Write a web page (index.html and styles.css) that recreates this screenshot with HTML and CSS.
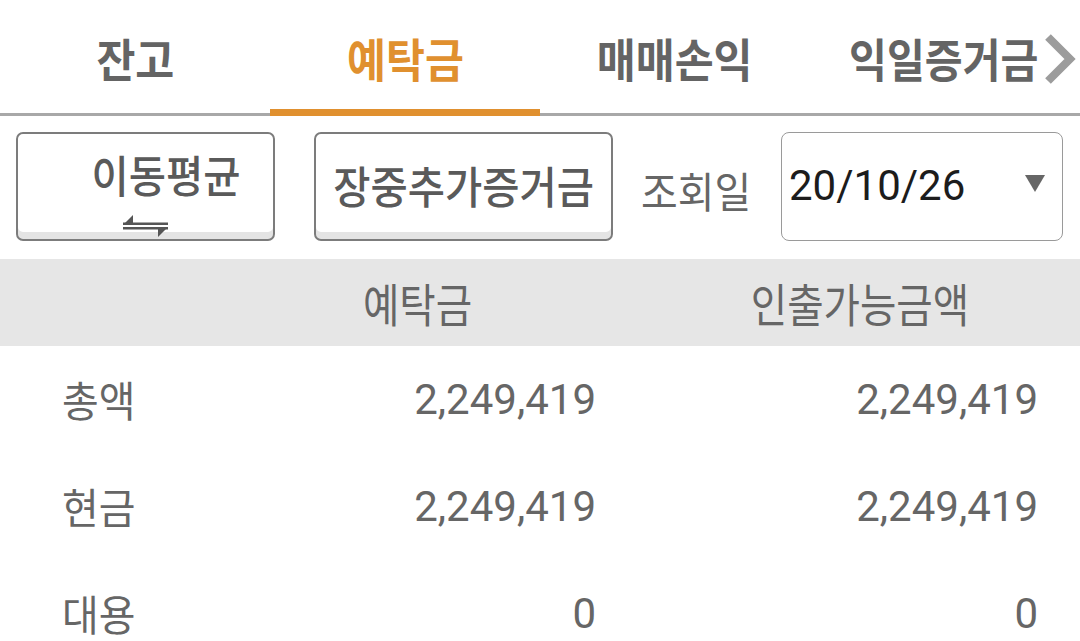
FILE: index.html
```html
<!DOCTYPE html>
<html lang="ko">
<head>
<meta charset="utf-8">
<title>예탁금</title>
<link rel="stylesheet" href="styles.css">
</head>
<body>
<nav class="tabs">
  <div class="tab"><span class="tl">잔고</span></div>
  <div class="tab active"><span class="tl">예탁금</span></div>
  <div class="tab"><span class="tl">매매손익</span></div>
  <div class="tab last"><span class="tl">익일증거금</span>
    <svg class="chev" width="32" height="50" viewBox="0 0 32 50"><polyline points="4,3 26,25 4,47" fill="none" stroke="#9c9c9c" stroke-width="8"/></svg>
  </div>
</nav>

<section class="controls">
  <button class="btn btn-ma">
    <span class="bt">이동평균</span>
    <svg class="swap" width="48" height="24" viewBox="0 0 48 24">
      <rect x="1" y="8.5" width="45" height="2.5" fill="#555"/>
      <polygon points="1,11 11,1 11,11" fill="#555"/>
      <rect x="1" y="13" width="45" height="2.5" fill="#555"/>
      <polygon points="36,13 46,13 36,23" fill="#555"/>
    </svg>
  </button>
  <button class="btn btn-add"><span class="bt">장중추가증거금</span></button>
  <span class="lbl"><span class="kr">조회일</span></span>
  <div class="select">
    <span class="date">20/10/26</span>
    <svg class="tri" width="20" height="17" viewBox="0 0 20 17"><polygon points="0,0 20,0 10,17" fill="#666"/></svg>
  </div>
</section>

<section class="table">
  <div class="row head">
    <div class="c1"></div>
    <div class="c2"><span class="hk">예탁금</span></div>
    <div class="c3"><span class="hk">인출가능금액</span></div>
  </div>
  <div class="row">
    <div class="c1"><span class="kr">총액</span></div>
    <div class="c2 num">2,249,419</div>
    <div class="c3 num">2,249,419</div>
  </div>
  <div class="row">
    <div class="c1"><span class="kr">현금</span></div>
    <div class="c2 num">2,249,419</div>
    <div class="c3 num">2,249,419</div>
  </div>
  <div class="row">
    <div class="c1"><span class="kr">대용</span></div>
    <div class="c2 num">0</div>
    <div class="c3 num">0</div>
  </div>
</section>
</body>
</html>
```
FILE: styles.css
```css
* { box-sizing: border-box; }
html, body {
  margin: 0;
  padding: 0;
  background: #ffffff;
  width: 1080px;
  height: 641px;
  overflow: hidden;
  font-family: Roboto, "Noto Sans CJK KR", sans-serif;
  color: #666666;
}

/* Tabs */
.tabs {
  display: flex;
  height: 116px;
  border-bottom: 3px solid #a8a8a8;
}
.tab {
  position: relative;
  width: 270px;
  display: flex;
  align-items: center;
  justify-content: center;
  white-space: nowrap;
}
.tl {
  display: inline-block;
  font-family: "Noto Sans CJK KR", sans-serif;
  font-weight: 700;
  font-size: 46px;
  line-height: 1;
  color: #646464;
  transform: scaleX(0.92);
  transform-origin: center;
}
.tab.active .tl { color: #e0902f; }
.tab.active::after {
  content: "";
  position: absolute;
  left: 0;
  right: 0;
  bottom: -3px;
  height: 7px;
  background: #e0902f;
}
.tab.last { justify-content: flex-start; padding-left: 39px; }
.tab.last .tl { transform: scaleX(0.895); transform-origin: left center; }
.chev {
  position: absolute;
  right: 4px;
  top: 34px;
}

/* Controls */
.controls {
  display: flex;
  align-items: center;
  height: 109px;
  margin-top: 16px;
  padding-left: 16px;
}
.btn {
  height: 109px;
  background: #ffffff;
  border: 2px solid #7c7c7c;
  border-radius: 7px;
  box-shadow: inset 0 -7px 0 #e4e4e4;
  padding: 0;
  margin: 0;
  font-family: "Noto Sans CJK KR", sans-serif;
  cursor: pointer;
}
.bt {
  display: inline-block;
  font-size: 44px;
  font-weight: 500;
  line-height: 1;
  color: #5a5a5a;
  transform: scaleX(0.92);
}
.btn-ma {
  width: 259px;
  display: flex;
  flex-direction: column;
  align-items: center;
  padding-top: 18px;
}
.btn-ma .bt { margin-left: 40px; }
.btn-ma .swap { margin-top: 18px; }
.btn-add {
  width: 299px;
  margin-left: 39px;
  display: flex;
  align-items: center;
  justify-content: center;
  padding-bottom: 4px;
}
.lbl {
  margin-left: 28px;
  width: 140px;
  padding-top: 8px;
}
.kr {
  display: inline-block;
  font-family: "Noto Sans CJK KR", sans-serif;
  font-size: 42px;
  line-height: 1;
  color: #666666;
  transform: scaleX(0.95);
  transform-origin: left center;
}
.select {
  width: 282px;
  height: 109px;
  border: 1px solid #9a9a9a;
  border-radius: 8px;
  display: flex;
  align-items: center;
  justify-content: space-between;
  padding: 0 17px 2px 7px;
}
.date {
  font-family: Roboto, sans-serif;
  font-size: 42px;
  color: #1c1c1c;
  line-height: 1;
}
.tri { margin-top: -4px; }

/* Table */
.table { margin-top: 18px; }
.row {
  display: flex;
  align-items: center;
  height: 107px;
}
.row.head {
  height: 87px;
  background: #e6e6e6;
}
.c1 {
  width: 238px;
  padding-left: 62px;
}
.c2 {
  width: 358px;
  text-align: right;
}
.c3 {
  width: 356px;
  margin-left: 86px;
  text-align: right;
}
.head .c2, .head .c3 { text-align: center; }
.hk {
  display: inline-block;
  font-family: "Noto Sans CJK KR", sans-serif;
  font-size: 46px;
  line-height: 1;
  color: #666666;
  transform: scaleX(0.86);
}
.num {
  font-family: Roboto, sans-serif;
  font-size: 42px;
  line-height: 1;
  color: #666666;
}
```
